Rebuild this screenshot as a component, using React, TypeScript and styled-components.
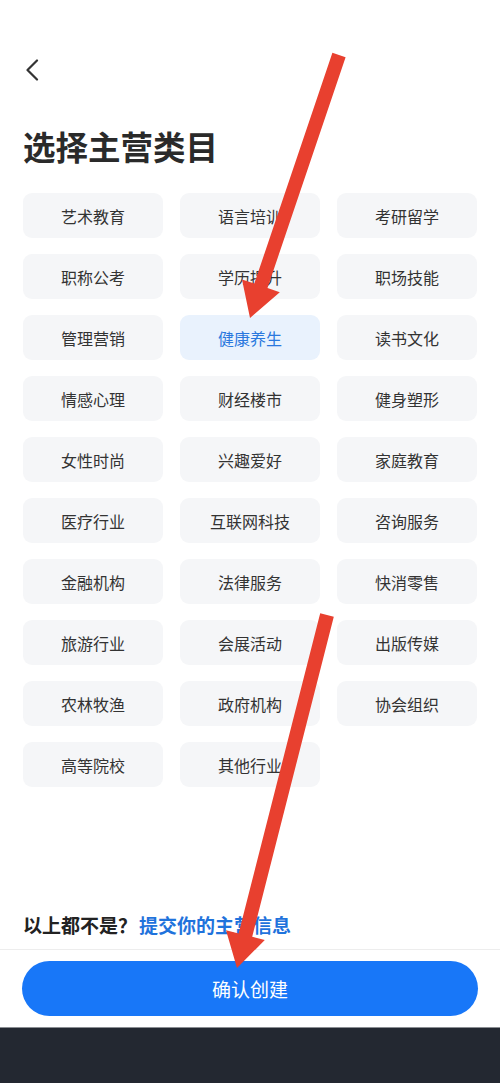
import styled, { createGlobalStyle } from "styled-components";

const GlobalStyle = createGlobalStyle`
    html, body {
        margin: 0;
        padding: 0;
        background: #ffffff;
    }
    * {
        box-sizing: border-box;
    }
`;

const Page = styled.div`
    position: relative;
    width: 500px;
    height: 1083px;
    display: flex;
    flex-direction: column;
    background: #ffffff;
    font-family: "Noto Sans CJK SC", "Noto Sans", sans-serif;
    overflow: hidden;
`;
const Header = styled.div`
    height: 125px;
    padding: 58px 0 0 25px;
`;
const BackButton = styled.div`
    width: 16px;
    height: 24px;
    display: flex;
    align-items: center;
`;
const Title = styled.h1`
    margin: 0;
    padding: 0 23px;
    font-size: 32.5px;
    line-height: 42px;
    font-weight: 700;
    color: #2a2a2a;
`;
const Grid = styled.div`
    display: grid;
    grid-template-columns: repeat(3, 1fr);
    column-gap: 17px;
    row-gap: 16px;
    padding: 26px 23px 0 23px;
`;
const Chip = styled.div<{ $active?: boolean }>`
    height: 45px;
    border-radius: 9px;
    display: flex;
    align-items: center;
    justify-content: center;
    font-size: 16px;
    color: ${props => props.$active ? "#2a78de" : "#333333"};
    background: ${props => props.$active ? "#e9f2fd" : "#f5f6f8"};
`;
const Footer = styled.div`
    margin-top: auto;
`;
const Hint = styled.div`
    padding: 0 23px;
    height: 36px;
    font-size: 19px;
    font-weight: 700;
    color: #222222;
    line-height: 36px;
`;
const HintLink = styled.span`
    margin-left: 2px;
    color: #1f73dc;
`;
const Divider = styled.div`
    margin-top: 6px;
    height: 1px;
    background: #ededed;
`;
const ButtonRow = styled.div`
    padding: 11px 22px 11px 22px;
`;
const Confirm = styled.div`
    height: 55px;
    border-radius: 28px;
    background: #1877f8;
    color: #ffffff;
    font-size: 19px;
    display: flex;
    align-items: center;
    justify-content: center;
`;
const NavBar = styled.div`
    height: 56px;
    background: #232831;
    border-top: 1px solid #8a8d92;
`;
const Overlay = styled.svg`
    position: absolute;
    left: 0;
    top: 0;
    pointer-events: none;
`;

const categories = [
    "艺术教育", "语言培训", "考研留学",
    "职称公考", "学历提升", "职场技能",
    "管理营销", "健康养生", "读书文化",
    "情感心理", "财经楼市", "健身塑形",
    "女性时尚", "兴趣爱好", "家庭教育",
    "医疗行业", "互联网科技", "咨询服务",
    "金融机构", "法律服务", "快消零售",
    "旅游行业", "会展活动", "出版传媒",
    "农林牧渔", "政府机构", "协会组织",
    "高等院校", "其他行业",
];

const App = () => {
    return (<Page>
        <GlobalStyle />
        <Header>
            <BackButton>
                <svg width="14" height="22" viewBox="0 0 14 22">
                    <polyline points="12,1.5 2.5,11 12,20.5" fill="none" stroke="#333" strokeWidth="2.2" strokeLinecap="round" strokeLinejoin="round" />
                </svg>
            </BackButton>
        </Header>
        <Title>选择主营类目</Title>
        <Grid>
            {categories.map(c => <Chip key={c} $active={c === "健康养生"}>{c}</Chip>)}
        </Grid>
        <Footer>
            <Hint>以上都不是？<HintLink>提交你的主营信息</HintLink></Hint>
            <Divider />
            <ButtonRow>
                <Confirm>确认创建</Confirm>
            </ButtonRow>
            <NavBar />
        </Footer>
        <Overlay width="500" height="1083" viewBox="0 0 500 1083">
            <polygon fill="#e8402f" points="332.4,52.8 345.6,57.2 267.5,288 279.8,292.2 250,318 242,279.4 254.3,283.6" />
            <polygon fill="#e8402f" points="320.2,613.3 333.8,616.7 252.2,936.8 264.8,940 237,968 226,930.2 238.6,933.4" />
        </Overlay>
    </Page>);
};
export default App;
